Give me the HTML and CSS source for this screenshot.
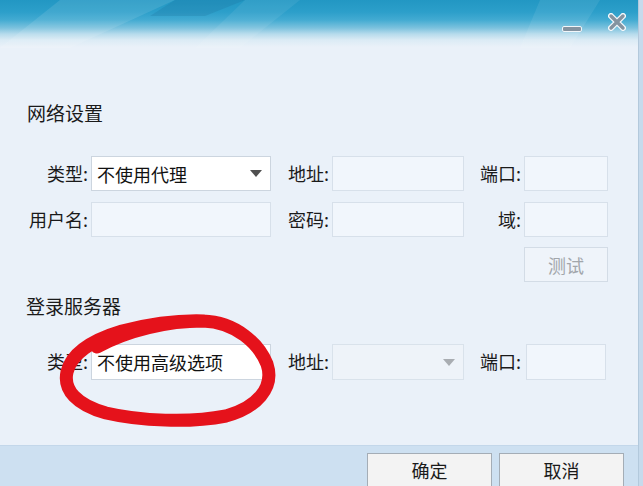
FILE: index.html
```html
<!DOCTYPE html>
<html lang="zh-CN">
<head>
<meta charset="utf-8">
<title>网络设置</title>
<link rel="stylesheet" href="styles.css">
</head>
<body>
<div class="window">
  <div class="dialog">
    <div class="titlebar">
      <svg class="deco" width="638" height="48" viewBox="0 0 638 48" aria-hidden="true">
        <polygon points="60,0 175,0 70,48 0,48" fill="#ffffff" opacity="0.10"/>
        <polygon points="175,0 245,0 205,16 150,16" fill="#1c6f9a" opacity="0.25"/>
        <polygon points="245,0 300,0 240,48 195,48" fill="#ffffff" opacity="0.07"/>
        <polygon points="540,0 600,0 570,48 520,48" fill="#ffffff" opacity="0.08"/>
      </svg>
      <div class="controls">
        <span class="btn-min"></span>
        <svg class="btn-close" width="18" height="18" viewBox="0 0 18 18" aria-hidden="true">
          <path d="M3 3 L15 15 M15 3 L3 15" stroke="#f4f8fb" stroke-width="6" stroke-linecap="round"/>
          <path d="M3 3 L15 15 M15 3 L3 15" stroke="#8493a0" stroke-width="3.4" stroke-linecap="round"/>
        </svg>
      </div>
    </div>

    <div class="content">
      <h2 class="section-title">网络设置</h2>
      <div class="form-grid">
        <label class="lbl">类型:</label>
        <div class="select">不使用代理<span class="arrow"></span></div>
        <label class="lbl">地址:</label>
        <div class="field"></div>
        <label class="lbl">端口:</label>
        <div class="field"></div>

        <label class="lbl">用户名:</label>
        <div class="field"></div>
        <label class="lbl">密码:</label>
        <div class="field"></div>
        <label class="lbl">域:</label>
        <div class="field"></div>
      </div>
      <div class="test-row">
        <button class="btn-test">测试</button>
      </div>

      <h2 class="section-title second">登录服务器</h2>
      <div class="form-grid server">
        <label class="lbl">类型:</label>
        <div class="select plain">不使用高级选项</div>
        <label class="lbl">地址:</label>
        <div class="select disabled"><span class="arrow grey"></span></div>
        <label class="lbl">端口:</label>
        <div class="field port"></div>
      </div>
    </div>

    <div class="footer">
      <button class="btn">确定</button>
      <button class="btn">取消</button>
    </div>
  </div>
  <div class="edge"></div>
</div>

<svg class="annotation" width="643" height="486" viewBox="0 0 643 486" aria-hidden="true">
  <path d="M97 347 C128 330 168 321 203 321 C236 322 259 344 267 364 C275 388 256 408 226 416 C190 423 140 421 106 413 C77 405 63 390 67 372 C71 354 92 340 122 331 C150 324 176 320 204 321"
        fill="none" stroke="#e5121b" stroke-width="13" stroke-linecap="round" stroke-linejoin="round"/>
</svg>
</body>
</html>
```

FILE: styles.css
```css
html, body {
  margin: 0;
  padding: 0;
}

body {
  width: 643px;
  height: 486px;
  overflow: hidden;
  position: relative;
  font-family: "Noto Sans CJK SC", "Noto Sans", sans-serif;
  color: #1e1e1e;
  background: #eaf1f9;
}

.window {
  display: flex;
  width: 643px;
  height: 486px;
}

.dialog {
  width: 638px;
  height: 486px;
  display: flex;
  flex-direction: column;
  background: #eaf1f9;
}

.edge {
  width: 4px;
  border-left: 1px solid #b3c9dc;
  background: #c6daec;
}

/* title bar */
.titlebar {
  position: relative;
  height: 48px;
  flex: none;
  background: linear-gradient(to bottom,
    #2297c3 0px,
    #2c9fca 12px,
    #43abd2 20px,
    #7cc2de 28px,
    #b6dbec 34px,
    #dbebf5 40px,
    #eaf1f9 47px);
}

.deco {
  position: absolute;
  left: 0;
  top: 0;
}

.controls {
  position: absolute;
  right: 12px;
  top: 11px;
  display: flex;
  align-items: center;
  gap: 26px;
}

.btn-min {
  display: block;
  width: 18px;
  height: 4px;
  margin-top: 15px;
  background: #8493a0;
  border: 1px solid #f1f6fa;
  border-radius: 2px;
}

.btn-close {
  display: block;
}

/* content */
.content {
  flex: 1;
  padding: 53px 0 0 27px;
}

.section-title {
  margin: 0;
  font-size: 19px;
  font-weight: normal;
  line-height: 24px;
  height: 24px;
  color: #1a1a1a;
}

.section-title.second {
  margin-top: 12px;
  margin-left: -1px;
}

.form-grid {
  display: grid;
  grid-template-columns: 64px 180px 61px 132px 60px 84px;
  grid-auto-rows: 35px;
  row-gap: 11px;
  margin-top: 31px;
  align-items: stretch;
}

.form-grid.server {
  margin-top: 26px;
  grid-auto-rows: 36px;
}

.lbl {
  font-size: 18px;
  line-height: 35px;
  text-align: right;
  padding-right: 3px;
  white-space: nowrap;
  color: #1a1a1a;
}

.field {
  box-sizing: border-box;
  background: #f1f6fc;
  border: 1px solid #d7e0ea;
}

.field.port {
  width: 80px;
  margin-left: 2px;
}

.select {
  box-sizing: border-box;
  display: flex;
  align-items: center;
  justify-content: space-between;
  padding: 0 8px 0 5px;
  background: #ffffff;
  border: 1px solid #ccd5df;
  font-size: 18px;
  line-height: 24px;
  color: #111;
  white-space: nowrap;
}

.select.disabled {
  justify-content: flex-end;
  background: #eef3f9;
  border-color: #d9e2eb;
}

.arrow {
  width: 0;
  height: 0;
  border-left: 6px solid transparent;
  border-right: 6px solid transparent;
  border-top: 7px solid #505050;
}

.arrow.grey {
  border-top-color: #a9adb2;
}

.test-row {
  display: flex;
  justify-content: flex-start;
  padding-left: 497px;
  margin-top: 10px;
}

.btn-test {
  box-sizing: border-box;
  width: 84px;
  height: 35px;
  padding: 0;
  background: #eff4fa;
  border: 1px solid #d3dce6;
  font-family: inherit;
  font-size: 18px;
  color: #a2a6ab;
}

/* footer */
.footer {
  height: 41px;
  flex: none;
  box-sizing: border-box;
  padding: 7px 14px 0 0;
  display: flex;
  justify-content: flex-end;
  align-items: flex-start;
  gap: 7px;
  background: #cde0f1;
  border-top: 1px solid #c3d7ea;
  overflow: hidden;
}

.btn {
  box-sizing: border-box;
  width: 125px;
  height: 38px;
  padding: 0 0 4px;
  background: #f3f3f3;
  border: 1px solid #a4adb6;
  font-family: inherit;
  font-size: 18px;
  color: #1a1a1a;
}

/* hand-drawn annotation overlay */
.annotation {
  position: absolute;
  left: 0;
  top: 0;
  pointer-events: none;
}
```
